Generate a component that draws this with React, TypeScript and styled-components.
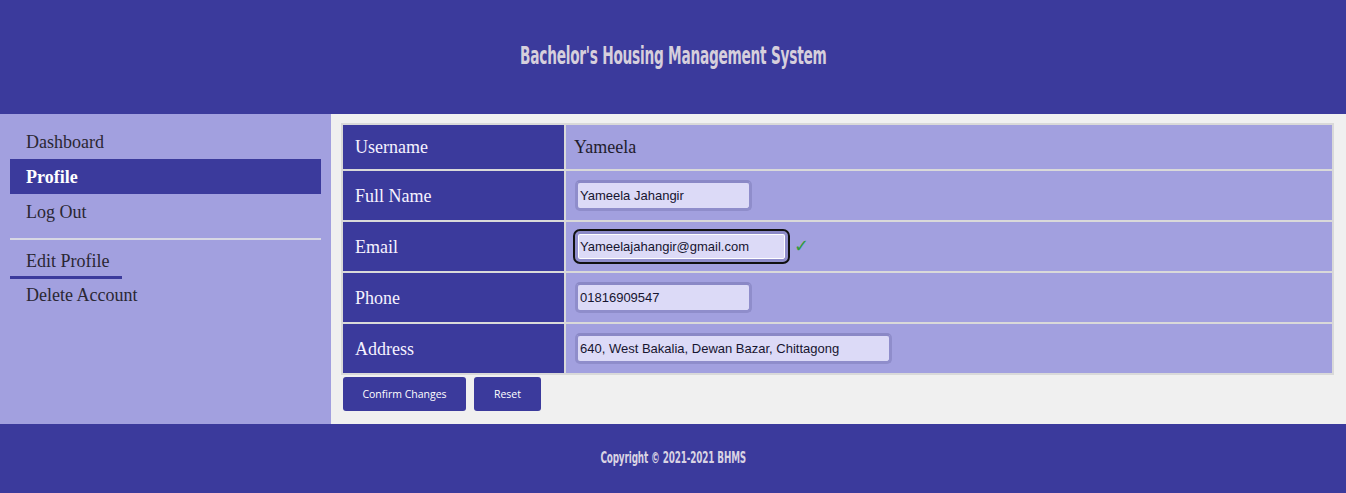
import React from "react";
import styled, { createGlobalStyle } from "styled-components";

const Global = createGlobalStyle`
  * { box-sizing: border-box; }
  body {
    margin: 0;
    background: #f0f0f0;
    font-family: "Liberation Serif", serif;
  }
`;

const Page = styled.div`
  display: flex;
  flex-direction: column;
  width: 1346px;
`;

const Header = styled.header`
  height: 114px;
  background: #3b3a9c;
  display: flex;
  align-items: center;
  justify-content: center;
`;

const Title = styled.h1`
  margin: 0;
  font-family: "DejaVu Sans Condensed", "DejaVu Sans", sans-serif;
  font-weight: 700;
  font-size: 24px;
  letter-spacing: -0.4px;
  color: #d6cfdc;
  white-space: nowrap;
  transform: translateY(-1px) scaleX(0.635);
`;

const Body = styled.div`
  display: flex;
  min-height: 310px;
`;

const Sidebar = styled.nav`
  width: 331px;
  flex: none;
  background: #a2a0df;
  padding: 10px 10px 0 10px;
  display: flex;
  flex-direction: column;
`;

const NavItem = styled.a<{ $active?: boolean }>`
  display: flex;
  align-items: center;
  height: 35px;
  padding: 1px 16px 0 16px;
  font-size: 18px;
  color: ${(p) => (p.$active ? "#ffffff" : "#2a2733")};
  background: ${(p) => (p.$active ? "#3b3a9c" : "transparent")};
  font-weight: ${(p) => (p.$active ? 700 : 400)};
  text-decoration: none;
`;

const Divider = styled.hr`
  margin: 9px 0 5px 0;
  border: none;
  height: 2px;
  background: #d8d8e4;
`;

const SubItem = styled.a<{ $active?: boolean }>`
  align-self: flex-start;
  display: flex;
  align-items: center;
  height: 34px;
  padding: 1px 12px 0 16px;
  font-size: 18px;
  color: #2a2733;
  text-decoration: none;
  border-bottom: 3px solid ${(p) => (p.$active ? "#3b3a9c" : "transparent")};
`;

const Main = styled.main`
  flex: 1;
  padding: 9px 12px 11px 10px;
  display: flex;
  flex-direction: column;
`;

const Table = styled.table`
  width: 100%;
  border-collapse: separate;
  border-spacing: 2px;
  background: #d9d9d9;
`;

const Label = styled.th<{ $short?: boolean }>`
  width: 221px;
  background: #3b3a9c;
  color: #f6f2ff;
  text-align: left;
  font-weight: 400;
  font-size: 18px;
  padding: 1px 12px 0 12px;
  height: ${(p) => (p.$short ? "44px" : "49px")};
`;

const Value = styled.td<{ $short?: boolean }>`
  background: #a2a0df;
  color: #1f1c2c;
  font-size: 18px;
  padding: 0 9px;
  height: ${(p) => (p.$short ? "44px" : "49px")};
`;

const PlainValue = styled.span`
  margin-left: -1px;
`;

const Field = styled.div`
  display: flex;
  align-items: center;
  gap: 6px;
`;

const Input = styled.input<{ $w: number; $focus?: boolean }>`
  width: ${(p) => p.$w}px;
  height: 31px;
  background: #dcdaf7;
  border: 3px solid #8f8dcb;
  border-top-color: #8a88c6;
  border-radius: 5px;
  padding: 0 2px;
  font-family: "Liberation Sans", Arial, sans-serif;
  font-size: 13px;
  color: #171530;
  outline: ${(p) => (p.$focus ? "2px solid #111" : "none")};
  outline-offset: 0px;
  box-shadow: ${(p) => (p.$focus ? "0 0 0 1px #fff inset" : "none")};
`;

const Check = styled.span`
  color: #2f9a3c;
  font-family: "DejaVu Sans", sans-serif;
  font-size: 18px;
  margin-top: -2px;
`;

const Actions = styled.div`
  display: flex;
  gap: 8px;
  margin: 2px 0 0 2px;
`;

const Button = styled.button<{ $w: number }>`
  width: ${(p) => p.$w}px;
  height: 34px;
  border: none;
  border-radius: 3px;
  background: #3b3a9c;
  color: #ffffff;
  font-family: "Open Sans", sans-serif;
  font-size: 10.5px;
  cursor: pointer;
`;

const Footer = styled.footer`
  height: 69px;
  background: #3b3a9c;
  display: flex;
  align-items: center;
  justify-content: center;
`;

const Copy = styled.p`
  margin: 0;
  font-family: "DejaVu Sans Condensed", "DejaVu Sans", sans-serif;
  font-size: 15px;
  font-weight: 700;
  letter-spacing: -0.2px;
  color: #d9d3e3;
  white-space: nowrap;
  transform: translateY(-1px) scaleX(0.655);
`;

export default function App() {
  return (
    <Page>
      <Global />
      <Header>
        <Title>Bachelor's Housing Management System</Title>
      </Header>
      <Body>
        <Sidebar>
          <NavItem href="#">Dashboard</NavItem>
          <NavItem href="#" $active>
            Profile
          </NavItem>
          <NavItem href="#">Log Out</NavItem>
          <Divider />
          <SubItem href="#" $active>
            Edit Profile
          </SubItem>
          <SubItem href="#">Delete Account</SubItem>
        </Sidebar>
        <Main>
          <Table>
            <tbody>
              <tr>
                <Label $short>Username</Label>
                <Value $short>
                  <PlainValue>Yameela</PlainValue>
                </Value>
              </tr>
              <tr>
                <Label>Full Name</Label>
                <Value>
                  <Input $w={177} defaultValue="Yameela Jahangir" />
                </Value>
              </tr>
              <tr>
                <Label>Email</Label>
                <Value>
                  <Field>
                    <Input $w={213} $focus defaultValue="Yameelajahangir@gmail.com" />
                    <Check>✓</Check>
                  </Field>
                </Value>
              </tr>
              <tr>
                <Label>Phone</Label>
                <Value>
                  <Input $w={177} defaultValue="01816909547" />
                </Value>
              </tr>
              <tr>
                <Label>Address</Label>
                <Value>
                  <Input $w={317} defaultValue="640, West Bakalia, Dewan Bazar, Chittagong" />
                </Value>
              </tr>
            </tbody>
          </Table>
          <Actions>
            <Button $w={123}>Confirm Changes</Button>
            <Button $w={67}>Reset</Button>
          </Actions>
        </Main>
      </Body>
      <Footer>
        <Copy>Copyright © 2021-2021 BHMS</Copy>
      </Footer>
    </Page>
  );
}
